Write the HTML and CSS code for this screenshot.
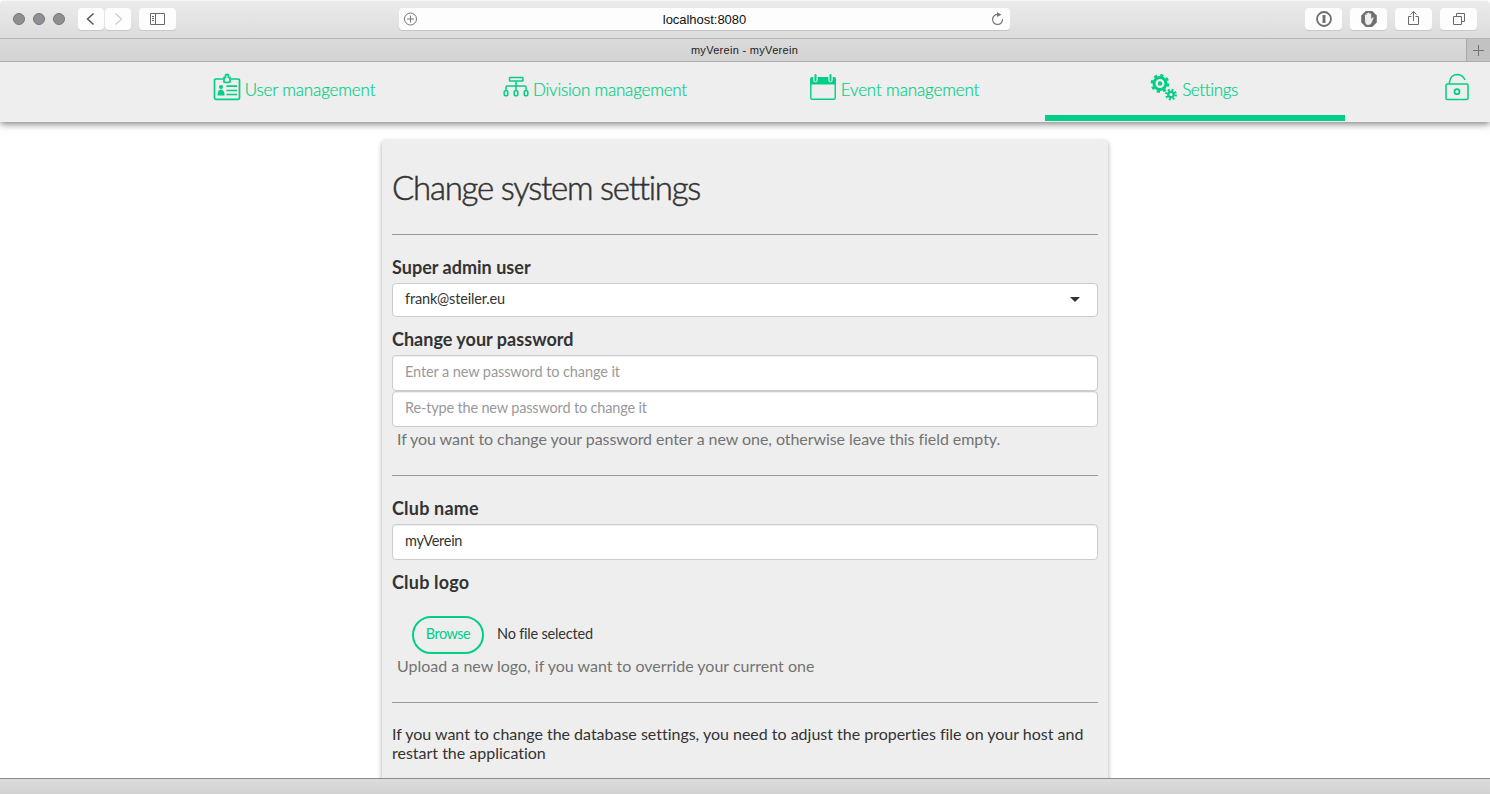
FILE: index.html
```html
<!DOCTYPE html>
<html lang="en">
<head>
<meta charset="utf-8">
<title>myVerein - myVerein</title>
<link rel="stylesheet" href="styles.css">
</head>
<body>
<div class="window">
  <header class="toolbar">
    <div class="lights"><i></i><i></i><i></i></div>
    <div class="history">
      <span class="tool back"><svg width="26" height="22" viewBox="0 0 26 22"><path d="M15.500 5.500 9.500 11l6 5.500" fill="none" stroke="#555" stroke-width="1.500"/></svg></span>
      <span class="tool forward"><svg width="26" height="22" viewBox="0 0 26 22"><path d="M10.500 5.500 16.500 11l-6 5.500" fill="none" stroke="#d0d0d0" stroke-width="1.300"/></svg></span>
    </div>
    <span class="tool sidebar"><svg width="37" height="22" viewBox="0 0 37 22"><path d="M11.500 5.500h14v11h-14zM16.500 5.500v11M13 8.500h2M13 10.500h2M13 12.500h2" fill="none" stroke="#6a6a6a"/></svg></span>
    <div class="address">
      <svg width="14" height="14" viewBox="0 0 14 14"><circle cx="6.500" cy="7" r="6" fill="none" stroke="#777"/><path d="M3 7h7M6.500 3.500v7" stroke="#777"/></svg>
      <span class="url">localhost:8080</span>
      <svg width="14" height="14" viewBox="0 0 14 14"><path d="M7 2.500A5 5 0 1 0 11.500 7" fill="none" stroke="#777" stroke-width="1.200"/><path d="M6 0 10.500 2.700 6 5z" fill="#777"/></svg>
    </div>
    <div class="actions">
      <span class="tool"><svg width="37" height="22" viewBox="0 0 37 22"><circle cx="19" cy="11" r="7" fill="none" stroke="#707070" stroke-width="1.800"/><path d="M17.500 7h3v3.500l-.6.600.6.600V15h-3v-3.500l.6-.6-.6-.6z" fill="#707070"/></svg></span>
      <span class="tool"><svg width="37" height="22" viewBox="0 0 37 22"><path d="M15.800 3h6.400l4.600 4.600v6.800L22.200 19h-6.400l-4.600-4.600V7.600z" fill="#707070"/><path d="M15 12V7q.7-1 1.400 0V5.500q.8-1 1.600 0V5q.8-1 1.600 0v1q.8-1 1.600 0v5l1.500-1.600q1.200-.3.800.8L21.500 15q-1 2-3.500 2-3 0-3-5z" fill="#eee"/></svg></span>
      <span class="tool"><svg width="37" height="22" viewBox="0 0 37 22"><path d="M16.500 8.500h-3v8h10v-8h-3M18.500 13V3.500M15.500 6.500l3-3 3 3" fill="none" stroke="#6a6a6a"/></svg></span>
      <span class="tool"><svg width="37" height="22" viewBox="0 0 37 22"><path d="M13.500 8.500h8v8h-8zM16.500 8.500v-3h8v8h-3" fill="none" stroke="#6a6a6a"/></svg></span>
    </div>
  </header>
  <div class="tabs">
    <div class="tab">myVerein - myVerein</div>
    <div class="newtab"><svg width="11" height="11" viewBox="0 0 11 11"><path d="M0 5.500h11M5.500 0v11" stroke="#737373"/></svg></div>
  </div>
  <nav class="nav">
    <a class="item user"><svg width="28" height="28" viewBox="0 0 28 28" fill="none" stroke="#00cf85" stroke-width="1.700"><path d="M10 6H2.800Q1.500 6 1.500 7.200V25q0 1.300 1.300 1.300h22.400q1.300 0 1.300-1.300V7.200Q26.500 6 25.200 6H18"/><path d="M11 9V4.500H12.500V2.200Q14 .8 15.500 2.200V4.500H17V9q-3 1-6 0z"/><path d="M13.500 13.200H24M13.500 17.500H24M13.500 21.500H24"/><circle cx="8" cy="14" r="2" fill="#00cf85" stroke="none"/><path d="M4.500 22.500q0-6 3.500-6t3.500 6z" fill="#00cf85" stroke="none"/></svg><span>User management</span></a>
    <a class="item division"><svg width="26" height="22" viewBox="0 0 26 22" fill="none" stroke="#00cf85" stroke-width="1.500"><rect x="6.500" y="1.500" width="13.500" height="3.500" rx=".6"/><path d="M13 5.500V15M3 15v-4q0-1 1-1h18q1 0 1 1v4"/><rect x="1.200" y="14.800" width="3.600" height="5" rx="1"/><rect x="11.200" y="14.800" width="3.600" height="5" rx="1"/><rect x="21.200" y="14.800" width="3.600" height="5" rx="1"/></svg><span>Division management</span></a>
    <a class="item event"><svg width="28" height="28" viewBox="0 0 28 28"><path d="M1 11.500V6q0-2 2-2h22q2 0 2 2v5.500z" fill="#00cf85"/><path d="M1.800 10v15q0 1.300 1.300 1.300h21.800q1.300 0 1.300-1.300V10" fill="none" stroke="#00cf85" stroke-width="1.400"/><path d="M6.500 3v4M21.500 3v4" stroke="#eee" stroke-width="4.400" stroke-linecap="round"/><path d="M6.500 2v5.500M21.500 2v5.500" stroke="#00cf85" stroke-width="2" stroke-linecap="round"/></svg><span>Event management</span></a>
    <a class="item settings active"><svg width="28" height="28" viewBox="0 0 28 28" fill="none" stroke="#00cf85"><circle cx="10" cy="10.500" r="6" stroke-width="3"/><circle cx="10" cy="10.500" r="8" stroke-width="2.800" stroke-dasharray="3.142"/><circle cx="10" cy="10.500" r="2.200" fill="#00cf85" stroke="none"/><circle cx="21" cy="21.500" r="2.700" stroke-width="2.200"/><circle cx="21" cy="21.500" r="4.600" stroke-width="2.600" stroke-dasharray="1.806"/></svg><span>Settings</span></a>
    <a class="lock"><svg width="26" height="28" viewBox="0 0 26 28" fill="none" stroke="#00cf85" stroke-width="1.500"><rect x="2" y="11" width="22" height="15.500" rx="1.200"/><path d="M5.500 11V9Q6.500 2 13 1.600q5.500 0 8 5.400"/><circle cx="13" cy="18.700" r="2.500" stroke-width="1.800"/></svg></a>
  </nav>
  <main class="page">
    <form class="panel">
      <h1><span>Change system settings</span></h1>
      <hr>
      <label class="first">Super admin user</label>
      <div class="field select"><span>frank@steiler.eu</span><i class="caret"></i></div>
      <label class="second">Change your password</label>
      <div class="field hint">Enter a new password to change it</div>
      <div class="field hint retype">Re-type the new password to change it</div>
      <p class="help tight">If you want to change your password enter a new one, otherwise leave this field empty.</p>
      <hr class="gap">
      <label class="first wide">Club name</label>
      <div class="field name">myVerein</div>
      <label class="third wide">Club logo</label>
      <div class="upload"><span class="browse">Browse</span><span>No file selected</span></div>
      <p class="help">Upload a new logo, if you want to override your current one</p>
      <hr class="gap">
      <p class="note">If you want to change the database settings, you need to adjust the properties file on your host and<br>restart the application</p>
    </form>
  </main>
  <footer class="statusbar"></footer>
</div>
</body>
</html>
```
FILE: styles.css
```css
* { box-sizing: border-box; }
body { margin: 0; background: #fff; font-family: Lato, sans-serif; color: #333; font-variant-ligatures: none; }
.window { width: 1490px; height: 794px; display: flex; flex-direction: column; overflow: hidden; border-radius: 5px 5px 0 0; }
svg { display: block; flex: none; }

.toolbar { position: relative; z-index: 2; height: 39px; flex: none; display: flex; align-items: flex-start; padding: 7px 13px 0; border-top: 1px solid #f6f6f6; border-bottom: 1px solid #b4b4b4; background: linear-gradient(#ebebeb, #dcdcdc); }
.lights { display: flex; gap: 8px; padding-top: 5px; width: 65px; }
.lights i { width: 12px; height: 12px; border-radius: 50%; background: #8f8e93; border: 1px solid #77767a; }
.tool { display: block; height: 22px; background: #fdfdfd; border-radius: 4px; box-shadow: 0 1px 0 #c9c9c9; }
.history { display: flex; gap: 1px; margin-right: 8px; }
.address { margin-left: 223px; width: 611px; height: 22px; padding: 0 5px; display: flex; align-items: center; justify-content: space-between; background: #fdfdfd; border-radius: 4px; box-shadow: 0 1px 0 #c5c5c5; }
.url { padding-top: 2px; font: 13px/22px "Liberation Sans", sans-serif; color: #111; letter-spacing: -.03px; }
.actions { margin-left: auto; display: flex; gap: 8px; }

.tabs { position: relative; z-index: 2; height: 23px; flex: none; display: flex; border-bottom: 1px solid #adadad; background: linear-gradient(#dadada, #d3d3d3); }
.tab { flex: 1; padding-left: 23px; text-align: center; font: 11px/22px "Liberation Sans", sans-serif; color: #222; letter-spacing: .3px; }
.newtab { width: 24px; background: #c2c2c2; border-left: 1px solid #a9a9a9; display: flex; align-items: center; justify-content: center; }

.nav { position: relative; height: 60px; flex: none; display: flex; padding-left: 145px; background: #eee; box-shadow: 0 2px 7px rgba(0,0,0,.5); }
.item { width: 300px; height: 59px; padding: 0 2px 6px 0; display: flex; justify-content: center; gap: 4px; color: #00cf85; font-size: 17px; font-weight: 300; line-height: 55px; letter-spacing: -.14px; -webkit-text-stroke: .2px #00cf85; }
.item svg { margin-top: 11px; }
.division { padding-right: 0; letter-spacing: -.2px; }
.division svg { margin-top: 14px; }
.settings { letter-spacing: -.35px; }
.active { border-bottom: 6px solid #00cf85; }
.lock { margin-left: auto; padding: 11px 20px 0 0; }

.page { flex: 1; min-height: 0; padding-top: 18px; display: flex; justify-content: center; overflow: hidden; }
.panel { width: 726px; height: 660px; padding: 0 10px; background: #eee; border-radius: 3px 3px 0 0; box-shadow: 0 2px 5px rgba(0,0,0,.35); white-space: nowrap; }
h1 { margin: 0; height: 94px; font-size: 33px; font-weight: 300; line-height: 94px; letter-spacing: -1.25px; -webkit-text-stroke: .5px #333; }
hr { height: 1px; margin: 0; border: 0; background: #999; }
label { display: block; font-size: 18px; font-weight: 700; line-height: 20px; letter-spacing: .02px; }
.wide { letter-spacing: .2px; }
.first { height: 48px; padding-top: 22px; }
.second { height: 38px; padding-top: 12px; }
.third { height: 56px; padding-top: 12px; }
.field { height: 36px; padding: 0 12px; background: #fff; border: 1px solid #ccc; border-radius: 4px; box-shadow: inset 0 1px 1px rgba(0,0,0,.07); font-size: 14.5px; line-height: 31px; letter-spacing: -.16px; }
.select { height: 34px; display: flex; justify-content: space-between; box-shadow: none; line-height: 29px; }
.name { letter-spacing: -.3px; }
.caret { margin: 13px 5px 0 0; height: 5px; border: 5px solid transparent; border-top-color: #333; border-bottom: 0; }
.hint { color: #999; letter-spacing: -.1px; }
.retype { letter-spacing: -.17px; }
.help { margin: 0; height: 26px; padding-left: 5px; font-size: 16px; line-height: 23px; color: #737373; }
.tight { letter-spacing: -.06px; }
.gap { margin-top: 22px; }
.upload { height: 38px; padding-left: 20px; display: flex; gap: 13px; font-size: 14.5px; line-height: 35px; letter-spacing: -.2px; }
.browse { width: 72px; border: 2px solid #00cf85; border-radius: 19px; color: #00cf85; text-align: center; line-height: 32px; letter-spacing: -.5px; }
.note { margin: 21px 0 0; font-size: 16px; line-height: 19px; letter-spacing: -.01px; }

.statusbar { position: relative; height: 16px; flex: none; border-top: 1px solid #8b8b8b; background: linear-gradient(#dcdcdc, #d2d2d2); }
```
